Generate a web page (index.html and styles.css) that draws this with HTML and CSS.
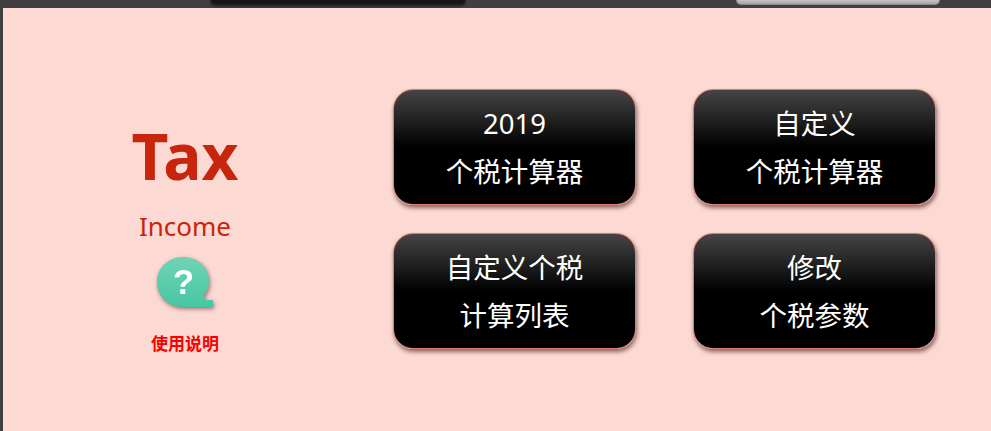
FILE: index.html
```html
<!DOCTYPE html>
<html lang="zh-CN">
<head>
    <meta charset="UTF-8">
    <title>Income Tax</title>
    <link rel="stylesheet" href="styles.css">
</head>
<body>
    <div class="top-bar">
        <div class="top-dark"></div>
        <div class="top-light"></div>
    </div>
    <div class="page">
        <div class="brand">
            <div class="brand-title">Tax</div>
            <div class="brand-sub">Income</div>
            <svg class="help-icon" width="58" height="52" viewBox="0 0 58 52">
                <defs>
                    <linearGradient id="bubble" x1="0" y1="0" x2="0" y2="1">
                        <stop offset="0" stop-color="#70d3b5"/>
                        <stop offset="1" stop-color="#46c7a3"/>
                    </linearGradient>
                </defs>
                <path fill="url(#bubble)" d="M27 1C42 1 53 11 53 25C53 31 51 36 48 39L49 44L57 44L57 51L27 51C12 51 1 40 1 26C1 12 12 1 27 1Z"/>
                <text class="help-mark" x="27.5" y="38" text-anchor="middle">?</text>
            </svg>
            <div class="help-label">使用说明</div>
        </div>
        <div class="menu">
            <a class="menu-btn">2019<br>个税计算器</a>
            <a class="menu-btn">自定义<br>个税计算器</a>
            <a class="menu-btn">自定义个税<br>计算列表</a>
            <a class="menu-btn">修改<br>个税参数</a>
        </div>
    </div>
</body>
</html>
```

FILE: styles.css
```css
html, body {
    margin: 0;
    padding: 0;
    height: 100%;
    overflow: hidden;
    background-color: #404040;
}

body {
    font-family: "Noto Sans", "Noto Sans CJK SC", sans-serif;
}

.top-bar {
    height: 8px;
    display: flex;
    overflow: hidden;
}

.top-dark {
    width: 254px;
    height: 4px;
    margin-left: 211px;
    border-radius: 0 0 4px 4px;
    background: #161616;
    box-shadow: 0 1px 3px 1px rgba(0, 0, 0, 0.55);
}

.top-light {
    width: 204px;
    height: 5px;
    margin-left: 271px;
    border-radius: 0 0 7px 7px;
    background: linear-gradient(#c4c4c4, #a4a4a4);
    border: 1px solid #8a8a8a;
    border-top: none;
    box-sizing: border-box;
}

.page {
    margin-left: 3px;
    height: 423px;
    background-color: #fdd9d3;
    display: flex;
}

.brand {
    width: 364px;
    display: flex;
    flex-direction: column;
    align-items: center;
    padding-top: 106px;
    box-sizing: border-box;
}

.brand-title {
    font-size: 64px;
    font-weight: bold;
    line-height: 84px;
    color: #c7250c;
}

.brand-sub {
    font-size: 26px;
    line-height: 34px;
    margin-top: 11px;
    color: #c7250c;
}

.help-icon {
    margin-top: 13px;
    filter: drop-shadow(1px 2px 2px rgba(90, 40, 40, 0.6));
}

.help-mark {
    font-family: "Liberation Sans", sans-serif;
    font-size: 35px;
    font-weight: bold;
    fill: #ffffff;
}

.help-label {
    font-size: 17px;
    font-weight: bold;
    line-height: 24px;
    margin-top: 24px;
    color: #fb0000;
}

.menu {
    display: grid;
    grid-template-columns: 243px 243px;
    grid-auto-rows: 115.5px;
    column-gap: 57px;
    row-gap: 28.5px;
    padding: 81px 0 0 26px;
}

.menu-btn {
    display: flex;
    align-items: center;
    justify-content: center;
    text-align: center;
    box-sizing: border-box;
    border: 1px solid #e0786c;
    border-radius: 20px;
    padding-top: 2px;
    font-size: 27.5px;
    line-height: 48px;
    color: #ffffff;
    background: linear-gradient(#454545, #000000 50%);
    box-shadow: 1px 3px 4px rgba(60, 30, 30, 0.6);
}
```
